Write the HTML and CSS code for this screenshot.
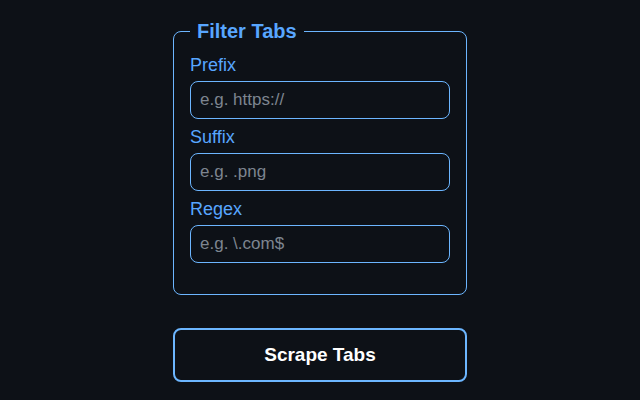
FILE: index.html
```html
<!DOCTYPE html>
<html>
<head>
<meta charset="utf-8">
<link rel="stylesheet" href="styles.css">
</head>
<body>
<div class="wrap">
  <fieldset class="filters">
    <legend class="legend">Filter Tabs</legend>
    <label class="label" for="prefix">Prefix</label>
    <input class="field" id="prefix" type="text" placeholder="e.g. https://">
    <label class="label" for="suffix">Suffix</label>
    <input class="field" id="suffix" type="text" placeholder="e.g. .png">
    <label class="label" for="regex">Regex</label>
    <input class="field" id="regex" type="text" placeholder="e.g. \.com$">
  </fieldset>
  <button class="btn" type="button">Scrape Tabs</button>
</div>
</body>
</html>
```

FILE: styles.css
```css
html, body {
  margin: 0;
  padding: 0;
  background: #0d1117;
}
body {
  font-family: "Liberation Sans", Arial, sans-serif;
  color: #58a6ff;
}
.wrap {
  width: 294px;
  margin: 0 auto;
  padding-top: 20px;
  display: flex;
  flex-direction: column;
}
.filters {
  margin: 0;
  border: 1px solid #6cb6ff;
  border-radius: 8px;
  padding: 12px 16px 23px 16px;
  display: flex;
  flex-direction: column;
}
.legend {
  margin-left: 0;
  padding: 0 7px;
  font-size: 20px;
  font-weight: bold;
  line-height: 23px;
  color: #58a6ff;
}
.label {
  display: block;
  font-size: 18px;
  line-height: 21px;
  margin-bottom: 5px;
  color: #58a6ff;
}
.field {
  box-sizing: border-box;
  width: 260px;
  height: 38px;
  margin: 0 0 8px 0;
  padding: 0 9px;
  border: 1.5px solid #6cb6ff;
  border-radius: 8px;
  background: #0d1117;
  color: #c9d1d9;
  font-family: "Liberation Sans", Arial, sans-serif;
  font-size: 17px;
  outline: none;
}
.field::placeholder {
  color: #7d8590;
}
.btn {
  margin-top: 33px;
  height: 54px;
  border: 2px solid #6cb6ff;
  border-radius: 8px;
  background: #0d1117;
  color: #ffffff;
  font-family: "Liberation Sans", Arial, sans-serif;
  font-size: 19px;
  font-weight: bold;
}
```
